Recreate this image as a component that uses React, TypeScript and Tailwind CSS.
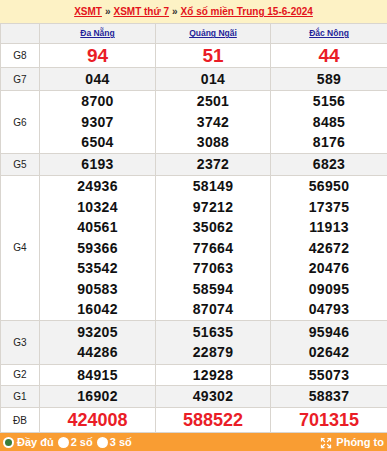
import { Expand } from 'lucide-react';

type Row = { label: string; values: string[][]; gray?: boolean; big?: string; h: string };

const provinces = ['Đa Nẵng', 'Quảng Ngãi', 'Đắc Nông'];

const rows: Row[] = [
  { label: 'G8', values: [['94'], ['51'], ['44']], big: 'text-[19px]', h: 'h-[24px]' },
  { label: 'G7', values: [['044'], ['014'], ['589']], gray: true, h: 'h-[23px]' },
  {
    label: 'G6',
    values: [
      ['8700', '9307', '6504'],
      ['2501', '3742', '3088'],
      ['5156', '8485', '8176'],
    ],
    h: 'h-[63px]',
  },
  { label: 'G5', values: [['6193'], ['2372'], ['6823']], gray: true, h: 'h-[22px]' },
  {
    label: 'G4',
    values: [
      ['24936', '10324', '40561', '59366', '53542', '90583', '16042'],
      ['58149', '97212', '35062', '77664', '77063', '58594', '87074'],
      ['56950', '17375', '11913', '42672', '20476', '09095', '04793'],
    ],
    h: 'h-[144px]',
  },
  {
    label: 'G3',
    values: [
      ['93205', '44286'],
      ['51635', '22879'],
      ['95946', '02642'],
    ],
    gray: true,
    h: 'h-[44px]',
  },
  { label: 'G2', values: [['84915'], ['12928'], ['55073']], h: 'h-[21px]' },
  { label: 'G1', values: [['16902'], ['49302'], ['58837']], gray: true, h: 'h-[22px]' },
  { label: 'ĐB', values: [['424008'], ['588522'], ['701315']], big: 'text-[18px]', h: 'h-[25px]' },
];

export default function App() {
  return (
    <div className="w-[387px] h-[451px] overflow-hidden bg-white font-['Liberation_Sans',Arial,sans-serif]">
      {/* Breadcrumb bar */}
      <div className="h-[23px] bg-[#fdf2c5] flex items-center justify-center text-[10px] font-bold text-[#e3131b]">
        <a className="underline">XSMT</a>
        <span className="mx-[3px] text-[#333]">»</span>
        <a className="underline">XSMT thứ 7</a>
        <span className="mx-[3px] text-[#333]">»</span>
        <a className="underline">Xổ số miền Trung 15-6-2024</a>
      </div>

      <table className="w-[387px] table-fixed border-collapse">
        <colgroup>
          <col className="w-[39px]" />
          <col className="w-[116px]" />
          <col className="w-[115px]" />
          <col className="w-[117px]" />
        </colgroup>
        <thead>
          <tr className="h-[20px] bg-[#f1f1f1]">
            <th className="border border-[#d9d5cf]"></th>
            {provinces.map((p) => (
              <th key={p} className="border border-[#d9d5cf] text-[8.5px] font-bold text-[#1f1f99] underline leading-none">
                {p}
              </th>
            ))}
          </tr>
        </thead>
        <tbody>
          {rows.map((r) => (
            <tr key={r.label} className={`${r.h} ${r.gray ? 'bg-[#f2f2f2]' : 'bg-white'}`}>
              <td className="border border-[#d9d5cf] text-center text-[10px] text-[#222] p-0">{r.label}</td>
              {r.values.map((col, i) => (
                <td key={i} className="border border-[#d9d5cf] text-center p-0 align-middle">
                  {col.map((v, j) => (
                    <div
                      key={j}
                      className={
                        r.big
                          ? `${r.big} font-bold text-[#ea1d27] leading-[22px]`
                          : 'text-[14px] font-bold text-[#111] leading-[20.5px] tracking-[0.3px]'
                      }
                    >
                      {v}
                    </div>
                  ))}
                </td>
              ))}
            </tr>
          ))}
        </tbody>
      </table>

      {/* Footer */}
      <div className="h-[19px] bg-[#f99d33] flex items-center justify-between px-[3px] text-white text-[11px] font-bold">
        <div className="flex items-center">
          <span className="w-[11px] h-[11px] rounded-full bg-white flex items-center justify-center mr-[3px]">
            <span className="w-[7px] h-[7px] rounded-full bg-[#3b7d3b]"></span>
          </span>
          <span className="mr-[4px]">Đầy đủ</span>
          <span className="w-[11px] h-[11px] rounded-full bg-white mr-[2px]"></span>
          <span className="mr-[4px]">2 số</span>
          <span className="w-[11px] h-[11px] rounded-full bg-white mr-[2px]"></span>
          <span>3 số</span>
        </div>
        <div className="flex items-center gap-[4px]">
          <Expand size={12} strokeWidth={2.5} />
          <span>Phóng to</span>
        </div>
      </div>
    </div>
  );
}
